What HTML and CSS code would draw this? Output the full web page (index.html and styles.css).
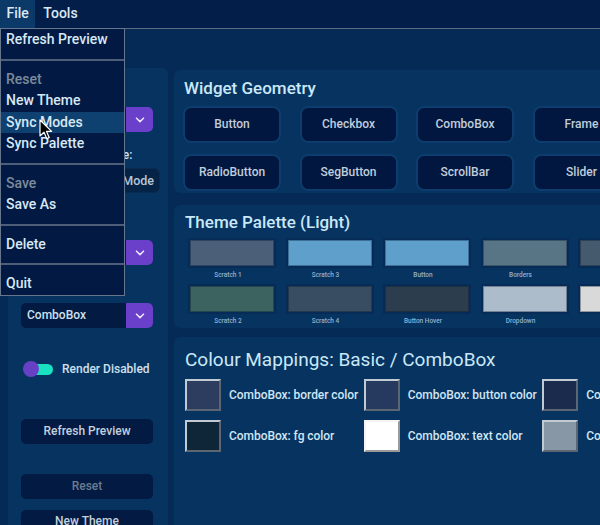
FILE: index.html
```html
<!DOCTYPE html>
<html>
<head>
<meta charset="utf-8">
<link rel="stylesheet" href="styles.css">
</head>
<body>
<div class="menubar">
  <span class="mb-item active">File</span>
  <span class="mb-item">Tools</span>
</div>
<div class="toolbar"></div>
<div class="main">
  <div class="left-panel">
    <div class="lp-spacer l1"></div>
    <div class="combo c1"><span class="combo-text"></span><span class="combo-btn"><svg width="10" height="6" viewBox="0 0 10 6"><path d="M1.5 1.2 L5 4.6 L8.5 1.2" fill="none" stroke="#e8e4ff" stroke-width="1.6" stroke-linecap="round" stroke-linejoin="round"/></svg></span></div>
    <div class="lp-label l2">Appearance Mode:</div>
    <div class="seg"><span class="seg-a"></span><span class="seg-b">Dark Mode</span></div>
    <div class="lp-spacer l3"></div>
    <div class="combo c2"><span class="combo-text"></span><span class="combo-btn"><svg width="10" height="6" viewBox="0 0 10 6"><path d="M1.5 1.2 L5 4.6 L8.5 1.2" fill="none" stroke="#e8e4ff" stroke-width="1.6" stroke-linecap="round" stroke-linejoin="round"/></svg></span></div>
    <div class="lp-spacer l4"></div>
    <div class="combo c3"><span class="combo-text">ComboBox</span><span class="combo-btn"><svg width="10" height="6" viewBox="0 0 10 6"><path d="M1.5 1.2 L5 4.6 L8.5 1.2" fill="none" stroke="#e8e4ff" stroke-width="1.6" stroke-linecap="round" stroke-linejoin="round"/></svg></span></div>
    <div class="switch-row">
      <span class="switch"><span class="track"></span><span class="knob"></span></span>
      <span class="switch-label">Render Disabled</span>
    </div>
    <div class="lp-btn b1">Refresh Preview</div>
    <div class="lp-btn b2 disabled">Reset</div>
    <div class="lp-btn b3">New Theme</div>
  </div>
  <div class="right-col">
    <div class="panel geo">
      <div class="title">Widget Geometry</div>
      <div class="geo-grid">
        <div class="gbtn">Button</div>
        <div class="gbtn">Checkbox</div>
        <div class="gbtn">ComboBox</div>
        <div class="gbtn">Frame</div>
        <div class="gbtn">RadioButton</div>
        <div class="gbtn">SegButton</div>
        <div class="gbtn">ScrollBar</div>
        <div class="gbtn">Slider</div>
      </div>
    </div>
    <div class="panel pal">
      <div class="title">Theme Palette (Light)</div>
      <div class="pal-grid">
        <div class="sw-cell"><div class="sw" style="background:#4c5f78"></div><div class="sw-label">Scratch 1</div></div>
        <div class="sw-cell"><div class="sw" style="background:#5f9fcb"></div><div class="sw-label">Scratch 3</div></div>
        <div class="sw-cell"><div class="sw" style="background:#5f9fcb"></div><div class="sw-label">Button</div></div>
        <div class="sw-cell"><div class="sw" style="background:#587585"></div><div class="sw-label">Borders</div></div>
        <div class="sw-cell"><div class="sw" style="background:#465a6e"></div><div class="sw-label"></div></div>
        <div class="sw-cell"><div class="sw" style="background:#3d6360"></div><div class="sw-label">Scratch 2</div></div>
        <div class="sw-cell"><div class="sw" style="background:#384d62"></div><div class="sw-label">Scratch 4</div></div>
        <div class="sw-cell"><div class="sw" style="background:#2c3e4d"></div><div class="sw-label">Button Hover</div></div>
        <div class="sw-cell"><div class="sw" style="background:#acbccb"></div><div class="sw-label">Dropdown</div></div>
        <div class="sw-cell"><div class="sw" style="background:#d9d9d9"></div><div class="sw-label"></div></div>
      </div>
    </div>
    <div class="panel map">
      <div class="title big">Colour Mappings: Basic / ComboBox</div>
      <div class="map-grid">
        <div class="map-item"><span class="msw" style="background:#2c3d5f"></span><span class="map-label">ComboBox: border color</span></div>
        <div class="map-item"><span class="msw" style="background:#253a5e"></span><span class="map-label">ComboBox: button color</span></div>
        <div class="map-item"><span class="msw" style="background:#1a2b4d"></span><span class="map-label">Co</span></div>
        <div class="map-item"><span class="msw" style="background:#0f2638"></span><span class="map-label">ComboBox: fg color</span></div>
        <div class="map-item"><span class="msw white" style="background:#ffffff"></span><span class="map-label">ComboBox: text color</span></div>
        <div class="map-item"><span class="msw" style="background:#8797a5"></span><span class="map-label">Co</span></div>
      </div>
    </div>
  </div>
</div>

<div class="menu">
  <div class="mi">Refresh Preview</div>
  <div class="sep"></div>
  <div class="mi dis">Reset</div>
  <div class="mi">New Theme</div>
  <div class="mi hl">Sync Modes</div>
  <div class="mi">Sync Palette</div>
  <div class="sep"></div>
  <div class="mi dis">Save</div>
  <div class="mi">Save As</div>
  <div class="sep"></div>
  <div class="mi">Delete</div>
  <div class="sep"></div>
  <div class="mi">Quit</div>
</div>

<svg class="cursor" width="14" height="22" viewBox="0 0 14 22"><path d="M1 1 L1 17 L5 13.2 L7.8 19.6 L10.2 18.6 L7.5 12.4 L12.6 12.4 Z" fill="#000" stroke="#fff" stroke-width="1.2" stroke-linejoin="round"/></svg>
</body>
</html>
```

FILE: styles.css
```css
* { box-sizing: border-box; }
html, body { margin: 0; padding: 0; }
body {
  width: 600px;
  height: 525px;
  overflow: hidden;
  background: #042a55;
  font-family: Roboto, "Liberation Sans", sans-serif;
  color: #c8d8e6;
  position: relative;
}
.menubar {
  height: 29px;
  background: #031e48;
  border-bottom: 1px solid #5b6b80;
  display: flex;
  align-items: stretch;
  gap: 1.5px;
}
.mb-item {
  font-size: 14px;
  font-weight: 500;
  color: #dbe9f5;
  padding: 0 6.5px;
  line-height: 26px;
}
.mb-item.active { background: #0c3a68; }
.toolbar { height: 39px; }
.main {
  display: flex;
  align-items: flex-start;
}
.left-panel {
  margin-left: 8px;
  width: 160px;
  height: 480px;
  background: #073360;
  border-radius: 6px;
  padding: 0 15px 0 13px;
  display: flex;
  flex-direction: column;
}
.lp-spacer { height: 16px; flex: 0 0 auto; }
.lp-label {
  height: 16px;
  line-height: 16px;
  font-size: 12px;
  font-weight: 500;
  color: #cfe0ee;
  white-space: nowrap;
  text-align: center;
  padding-right: 10px;
}
.l1 { margin-top: 12px; }
.l2 { margin-top: 15px; }
.l3 { margin-top: 19px; }
.l4 { margin-top: 11px; }
.combo {
  height: 25px;
  border-radius: 5px;
  background: #031a42;
  display: flex;
  overflow: hidden;
}
.c1 { margin-top: 11px; }
.c2 { margin-top: 12px; }
.c3 { margin-top: 11px; }
.combo-text {
  flex: 1;
  font-size: 12px;
  font-weight: 500;
  color: #cfe0ee;
  line-height: 25px;
  padding-left: 6px;
}
.combo-btn {
  width: 27px;
  background: #6a3fc9;
  display: flex;
  align-items: center;
  justify-content: center;
}
.seg {
  margin-top: 5px;
  height: 25px;
  width: 139px;
  border-radius: 6px;
  border: 1px solid #0a2a50;
  background: #052347;
  display: flex;
  font-size: 12.5px;
  font-weight: 500;
  color: #b9c6d3;
  overflow: hidden;
}
.seg-a, .seg-b {
  flex: 1;
  text-align: center;
  line-height: 23px;
  white-space: nowrap;
}
.seg-b { text-align: right; padding-right: 5px; }
.switch-row {
  margin-top: 33px;
  height: 16px;
  display: flex;
  align-items: center;
}
.switch {
  position: relative;
  width: 32px;
  height: 16px;
  margin-left: 2px;
}
.track {
  position: absolute;
  left: 8px;
  top: 2.5px;
  width: 22px;
  height: 11px;
  border-radius: 6px;
  background: #18e2c0;
}
.knob {
  position: absolute;
  left: 0;
  top: 0;
  width: 16px;
  height: 16px;
  border-radius: 50%;
  background: #6840c6;
}
.switch-label {
  margin-left: 7px;
  font-size: 12px;
  font-weight: 500;
  color: #cfe0ee;
  white-space: nowrap;
}
.lp-btn {
  height: 25px;
  border-radius: 5px;
  background: #031a42;
  text-align: center;
  line-height: 25px;
  font-size: 12px;
  font-weight: 500;
  color: #c3d0dd;
  flex: 0 0 auto;
}
.b1 { margin-top: 42px; }
.b2 { margin-top: 30px; }
.b3 { margin-top: 11px; line-height: 22px; }
.lp-btn.disabled { color: #6b7c92; }

.right-col {
  margin-left: 6px;
  width: 426px;
  flex: 0 0 auto;
  display: flex;
  flex-direction: column;
  padding-top: 2px;
}
.panel {
  background: #073360;
  border-radius: 6px 0 0 6px;
  overflow: hidden;
}
.title {
  font-size: 17px;
  font-weight: 500;
  line-height: 18px;
  color: #c9e8f8;
  white-space: nowrap;
}
.title.big { font-size: 19px; font-weight: 400; line-height: 22px; }
.geo {
  height: 123px;
  padding: 9px 0 0 9px;
}
.geo .title { padding-left: 1px; }
.geo-grid {
  margin-top: 9px;
  display: grid;
  grid-template-columns: 98px 98px 98px 98px;
  column-gap: 18.5px;
  row-gap: 11px;
}
.gbtn {
  height: 37px;
  border: 2px solid #0c3d6e;
  border-radius: 8px;
  background: #02173f;
  font-size: 12px;
  font-weight: 500;
  color: #c0cdda;
  text-align: center;
  line-height: 33px;
}
.pal {
  margin-top: 12px;
  height: 123px;
  padding: 8px 0 0 11px;
}
.pal-grid {
  margin-top: 9px;
  margin-left: 5px;
  display: grid;
  grid-template-columns: 84px 84px 84px 84px 84px;
  column-gap: 13.5px;
  row-gap: 0;
}
.sw-cell {
  height: 46px;
  display: flex;
  flex-direction: column;
  align-items: center;
}
.sw {
  width: 84px;
  height: 26px;
  flex: 0 0 auto;
  border: 1px solid rgba(0, 20, 50, 0.35);
  box-shadow: 0 0 0 2px #052b56;
}
.sw-label {
  margin-top: 5px;
  font-size: 6.5px;
  font-weight: 500;
  color: #8fb2d0;
  line-height: 9px;
  height: 9px;
  white-space: nowrap;
  padding-right: 8px;
}
.map {
  margin-top: 9px;
  height: 200px;
  padding: 12px 0 0 11px;
}
.map-grid {
  margin-top: 8px;
  display: grid;
  grid-template-columns: auto auto auto;
  justify-content: start;
  column-gap: 5.5px;
  row-gap: 9px;
}
.map-item {
  display: flex;
  align-items: center;
  white-space: nowrap;
}
.msw {
  width: 36px;
  height: 32px;
  border: 2px solid;
  border-color: #c2cad3 #5c6672 #5c6672 #c2cad3;
  flex: 0 0 auto;
}
.msw.white { border-color: #f4f4f4 #9a9a9a #9a9a9a #f4f4f4; }
.map-label {
  margin-left: 8px;
  font-size: 12px;
  font-weight: 500;
  color: #cfe6f4;
  letter-spacing: -0.05px;
}

.menu {
  position: absolute;
  left: 0;
  top: 28px;
  width: 125px;
  background: #021a43;
  border: 1px solid #66768c;
  display: flex;
  flex-direction: column;
}
.mi {
  height: 21.5px;
  line-height: 21.5px;
  padding-left: 5px;
  font-size: 14px;
  font-weight: 500;
  color: #d8e8f5;
  white-space: nowrap;
}
.mi.dis { color: #7d8a9b; }
.mi.hl { background: #0f4170; }
.sep {
  height: 18px;
  display: flex;
  align-items: center;
}
.sep::before {
  content: "";
  display: block;
  width: 100%;
  height: 2px;
  background: #4e5e78;
}
.cursor {
  position: absolute;
  left: 39px;
  top: 119px;
}
```
